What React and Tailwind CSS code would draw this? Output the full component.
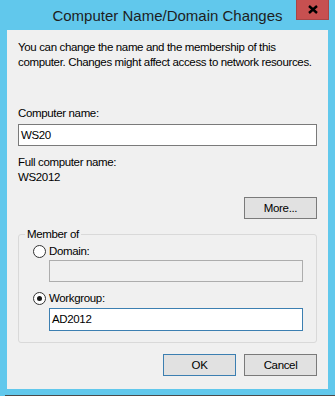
export default function App() {
  const font = { fontFamily: '"Liberation Sans", Arial, sans-serif' };

  return (
    <div className="w-[335px] h-[398px] bg-[#61c8ec] flex flex-col overflow-hidden text-black" style={font}>
      {/* title bar */}
      <div className="relative h-[30px] flex items-center justify-center shrink-0">
        <span className="text-[15px] leading-none text-[#1e1e1e]">Computer Name/Domain Changes</span>
        <button className="absolute top-0 right-[6px] w-[33px] h-[20px] bg-[#c75050] border border-[#a84545] border-t-0 flex items-center justify-center">
          <svg width="10" height="9" viewBox="0 0 10 9">
            <path d="M1 1 L9 8 M9 1 L1 8" stroke="#000" strokeWidth="2.4" />
          </svg>
        </button>
      </div>

      {/* client area */}
      <div className="mx-[7px] h-[359px] shrink-0 bg-[#f0f0f0] px-[11px] pt-[10px] text-[11.5px] leading-[15px] tracking-[-0.35px]">
        <p className="whitespace-nowrap">
          You can change the name and the membership of this
          <br />
          computer. Changes might affect access to network resources.
        </p>

        <div className="mt-[36px]">Computer name:</div>
        <div className="mt-[3px] h-[22px] border border-[#7a7a7a] bg-white px-[2px] flex items-center">WS20</div>

        <div className="mt-[9px]">Full computer name:</div>
        <div>WS2012</div>

        <div className="mt-[12px] flex justify-end">
          <button className="w-[73px] h-[22px] bg-[#e1e1e1] border border-[#7a7a7a]">More...</button>
        </div>

        <fieldset className="mt-[8px] border border-[#d9d9d9] rounded-[3px] pl-[14px] pr-[13px] pb-[11px]">
          <legend className="-ml-[8px] px-[2px] leading-[15px]">Member of</legend>

          <label className="flex items-center gap-[3px] mt-[2px] h-[15px]">
            <span className="w-[13px] h-[13px] rounded-full border border-[#333] bg-white shrink-0" />
            Domain:
          </label>
          <div className="mt-[1px] ml-[16px] h-[22px] border border-[#adadad] bg-[#f0f0f0]" />

          <label className="flex items-center gap-[3px] mt-[9px] h-[15px]">
            <span className="w-[13px] h-[13px] rounded-full border border-[#333] bg-white shrink-0 flex items-center justify-center">
              <span className="w-[5px] h-[5px] rounded-full bg-[#1a1a1a]" />
            </span>
            Workgroup:
          </label>
          <div className="mt-[2px] ml-[16px] h-[23px] border border-[#3c7fb1] bg-white px-[2px] flex items-center">AD2012</div>
        </fieldset>

        <div className="mt-[11px] flex justify-end gap-[8px]">
          <button className="w-[73px] h-[22px] bg-[#e1e1e1] border border-[#3c7fb1]">OK</button>
          <button className="w-[73px] h-[22px] bg-[#e1e1e1] border border-[#7a7a7a]">Cancel</button>
        </div>
      </div>

      {/* window edge below */}
      <div className="h-[6px] shrink-0" />
      <div className="h-[1px] ml-[5px] bg-[#4a4a4a] shrink-0" />
      <div className="flex-1 bg-white" />
    </div>
  );
}
